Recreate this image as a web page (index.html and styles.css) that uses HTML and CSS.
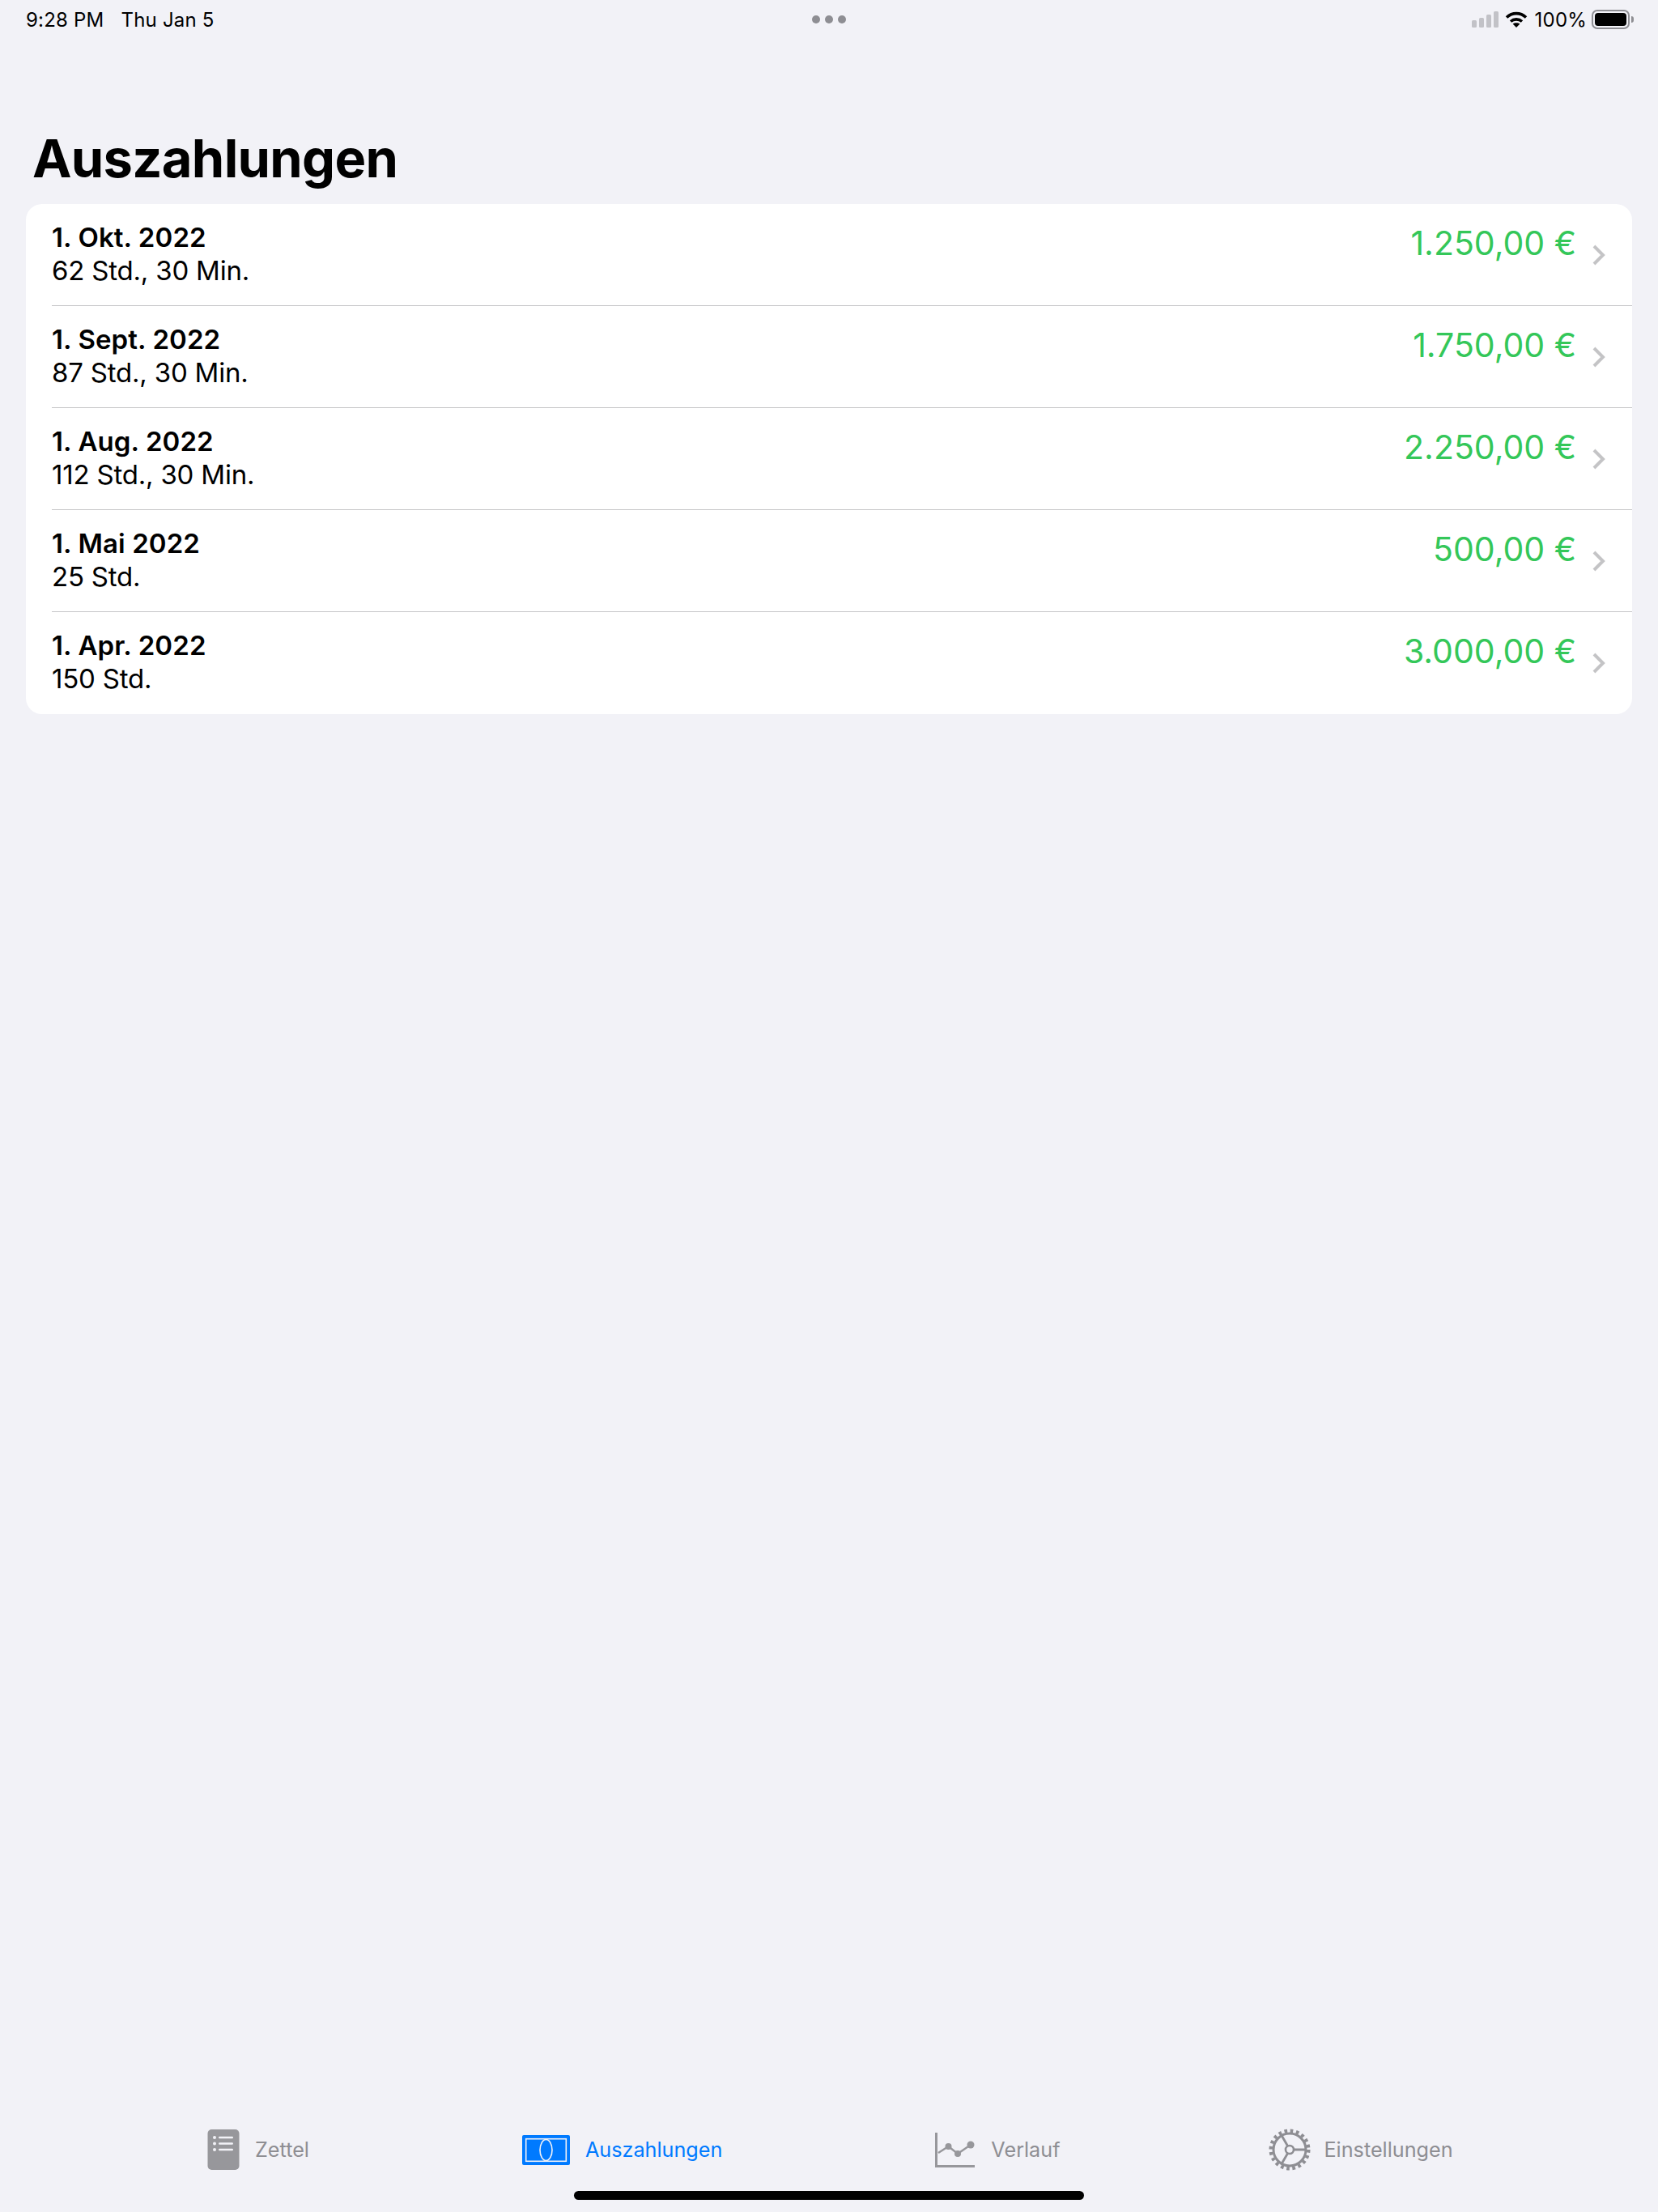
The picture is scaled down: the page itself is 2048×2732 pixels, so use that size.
FILE: index.html
```html
<!DOCTYPE html>
<html lang="de">
<head>
    <meta charset="UTF-8">
    <meta name="viewport" content="width=device-width, initial-scale=1.0">
    <title>Auszahlungen</title>
    <link rel="stylesheet" href="styles.css">
</head>
<body>
    <div class="statusbar">
        <div class="status-left">
            <span>9:28 PM</span>
            <span>Thu Jan 5</span>
        </div>
        <div class="status-dots"><i></i><i></i><i></i></div>
        <div class="status-right">
            <svg class="signal" width="33" height="20" viewBox="0 0 33 20">
                <rect x="0" y="11" width="6" height="9" rx="1.5"/>
                <rect x="9" y="8" width="6" height="12" rx="1.5"/>
                <rect x="18" y="4" width="6" height="16" rx="1.5"/>
                <rect x="27" y="0" width="6" height="20" rx="1.5"/>
            </svg>
            <svg class="wifi" width="28" height="20" viewBox="0 0 28 20">
                <path d="M2 7.5 C9 1 19 1 26 7.5" />
                <path d="M7 12.5 C11 9 17 9 21 12.5" />
                <path class="wifi-dot" d="M14 20 L9.6 15.6 C12 13.8 16 13.8 18.4 15.6 Z"/>
            </svg>
            <span class="battery-text">100%</span>
            <div class="battery"><div class="battery-fill"></div></div>
            <div class="battery-nub"></div>
        </div>
    </div>

    <h1>Auszahlungen</h1>

    <div class="list">
        <div class="row">
            <div class="row-inner">
                <div class="info"><div class="date">1. Okt. 2022</div><div class="hours">62 Std., 30 Min.</div></div>
                <div class="amount">1.250,00 €</div>
                <svg class="chevron" width="16" height="26" viewBox="0 0 16 26"><path d="M2 2 L13 13 L2 24"/></svg>
            </div>
        </div>
        <div class="row">
            <div class="row-inner">
                <div class="info"><div class="date">1. Sept. 2022</div><div class="hours">87 Std., 30 Min.</div></div>
                <div class="amount">1.750,00 €</div>
                <svg class="chevron" width="16" height="26" viewBox="0 0 16 26"><path d="M2 2 L13 13 L2 24"/></svg>
            </div>
        </div>
        <div class="row">
            <div class="row-inner">
                <div class="info"><div class="date">1. Aug. 2022</div><div class="hours">112 Std., 30 Min.</div></div>
                <div class="amount">2.250,00 €</div>
                <svg class="chevron" width="16" height="26" viewBox="0 0 16 26"><path d="M2 2 L13 13 L2 24"/></svg>
            </div>
        </div>
        <div class="row">
            <div class="row-inner">
                <div class="info"><div class="date">1. Mai 2022</div><div class="hours">25 Std.</div></div>
                <div class="amount">500,00 €</div>
                <svg class="chevron" width="16" height="26" viewBox="0 0 16 26"><path d="M2 2 L13 13 L2 24"/></svg>
            </div>
        </div>
        <div class="row">
            <div class="row-inner">
                <div class="info"><div class="date">1. Apr. 2022</div><div class="hours">150 Std.</div></div>
                <div class="amount">3.000,00 €</div>
                <svg class="chevron" width="16" height="26" viewBox="0 0 16 26"><path d="M2 2 L13 13 L2 24"/></svg>
            </div>
        </div>
    </div>

    <div class="spacer"></div>

    <div class="tabbar">
        <div class="tab">
            <svg width="40" height="50" viewBox="0 0 40 50">
                <rect x="0.5" y="0" width="39" height="50" rx="5" fill="#97979b"/>
                <g fill="#f2f2f7">
                    <circle cx="9" cy="10" r="2"/><circle cx="9" cy="17.5" r="2"/><circle cx="9" cy="25" r="2"/>
                    <rect x="14" y="8.7" width="18" height="2.6" rx="1.3"/>
                    <rect x="14" y="16.2" width="18" height="2.6" rx="1.3"/>
                    <rect x="14" y="23.7" width="18" height="2.6" rx="1.3"/>
                </g>
            </svg>
            <span>Zettel</span>
        </div>
        <div class="tab active">
            <svg width="59" height="37" viewBox="0 0 59 37">
                <rect width="59" height="37" rx="2" fill="#007aff"/>
                <rect x="4.7" y="4.7" width="49.6" height="27.6" fill="none" stroke="#f2f2f7" stroke-width="1.6"/>
                <ellipse cx="29.5" cy="18.5" rx="7.5" ry="13" fill="none" stroke="#f2f2f7" stroke-width="1.6"/>
            </svg>
            <span>Auszahlungen</span>
        </div>
        <div class="tab">
            <svg width="50" height="43" viewBox="0 0 50 43">
                <path d="M1.5 0 V41.5 H49" fill="none" stroke="#97979b" stroke-width="3"/>
                <path d="M4 25 L16.5 17 L28 26 L44 15" fill="none" stroke="#97979b" stroke-width="2.4"/>
                <circle cx="16.5" cy="17" r="4" fill="#97979b"/>
                <circle cx="28" cy="26" r="4" fill="#97979b"/>
                <circle cx="44" cy="15" r="4.5" fill="#97979b"/>
            </svg>
            <span>Verlauf</span>
        </div>
        <div class="tab tab-last">
            <svg width="52" height="52" viewBox="0 0 52 52" fill="none" stroke="#8e8e93">
                <circle cx="26" cy="26" r="23.3" stroke-width="4.4" stroke-dasharray="3.66 3.66"/>
                <circle cx="26" cy="26" r="20" stroke-width="3"/>
                <circle cx="26" cy="26" r="5" stroke-width="2.6"/>
                <path d="M31 26 H45 M23.6 21.5 L15.5 7.5 M23.6 30.5 L15.5 44.5" stroke-width="2.8"/>
            </svg>
            <span>Einstellungen</span>
        </div>
    </div>

    <div class="home-row"><div class="home-indicator"></div></div>
</body>
</html>
```

FILE: styles.css
```css
* {
    margin: 0;
    padding: 0;
    box-sizing: border-box;
}

body {
    font-family: Inter, "Noto Sans", sans-serif;
    background-color: #f2f2f7;
    color: #000;
    display: flex;
    flex-direction: column;
    height: 2732px;
    overflow: hidden;
}

.statusbar {
    display: flex;
    justify-content: space-between;
    align-items: center;
    height: 48px;
    padding: 0 30px 0 32px;
    font-size: 24px;
    letter-spacing: 0.2px;
    position: relative;
}

.status-left {
    display: flex;
    gap: 21px;
}

.status-dots {
    display: flex;
    gap: 6px;
    position: absolute;
    left: 1003px;
    top: 19px;
}

.status-dots i {
    display: block;
    width: 10px;
    height: 10px;
    border-radius: 50%;
    background: #8e8e93;
}

.status-right {
    display: flex;
    align-items: center;
}

.signal {
    fill: #c2c2c7;
    margin-right: 8px;
}

.wifi {
    fill: none;
    stroke: #000;
    stroke-width: 3.6;
    margin-right: 9px;
}

.wifi-dot {
    fill: #000;
    stroke: none;
}

.battery {
    width: 47px;
    height: 24px;
    margin-left: 6px;
    border: 2px solid #8e8e93;
    border-radius: 7px;
    padding: 2px;
}

.battery-fill {
    height: 100%;
    background: #000;
    border-radius: 4px;
}

.battery-nub {
    width: 3px;
    height: 8px;
    margin-left: 2px;
    background: #8e8e93;
    border-radius: 0 3px 3px 0;
}

h1 {
    font-size: 65px;
    font-weight: 700;
    line-height: 80px;
    margin: 108px 0 16px 40px;
    letter-spacing: -0.7px;
}

.list {
    margin: 0 32px;
    background: #fff;
    border-radius: 20px;
    overflow: hidden;
}

.row {
    height: 126px;
    padding-left: 32px;
}

.row-inner {
    display: flex;
    align-items: flex-start;
    height: 100%;
    border-bottom: 1px solid #c6c6c8;
}

.row:last-child .row-inner {
    border-bottom: none;
}

.info {
    flex: 1;
    padding-top: 21px;
}

.date {
    font-size: 33px;
    font-weight: 600;
    line-height: 41px;
    letter-spacing: 0.1px;
}

.hours {
    font-size: 33px;
    line-height: 41px;
    letter-spacing: -0.2px;
}

.amount {
    font-size: 41px;
    line-height: 50px;
    color: #34c759;
    margin-top: 23px;
    margin-right: 20px;
}

.chevron {
    fill: none;
    stroke: #c4c4c6;
    stroke-width: 4;
    margin-top: 50px;
    margin-right: 33px;
}

.spacer {
    flex: 1;
}

.tabbar {
    display: flex;
    align-items: center;
    gap: 263px;
    padding-left: 256px;
    height: 60px;
    color: #8e8e93;
    font-size: 25.2px;
}

.tab {
    display: flex;
    align-items: center;
    gap: 19px;
}

.tab-last {
    margin-left: -5px;
    gap: 16px;
}

.tab.active {
    color: #007aff;
}

.home-row {
    display: flex;
    justify-content: center;
    padding: 21px 0 15px;
}

.home-indicator {
    width: 630px;
    height: 11px;
    background: #000;
    border-radius: 6px;
}
```
